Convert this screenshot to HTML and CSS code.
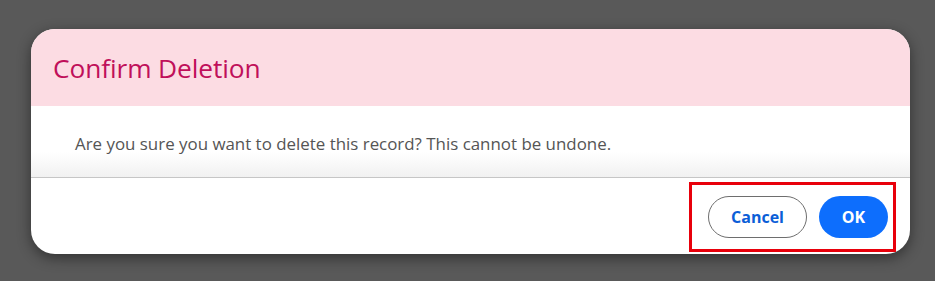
FILE: index.html
```html
<!DOCTYPE html>
<html lang="en">
<head>
<meta charset="utf-8">
<title>Confirm Deletion</title>
<link rel="stylesheet" href="styles.css">
</head>
<body>
<div class="dialog">
  <div class="dialog-header">
    <h1 class="dialog-title">Confirm Deletion</h1>
  </div>
  <div class="dialog-body">
    <p class="dialog-text">Are you sure you want to delete this record? This cannot be undone.</p>
  </div>
  <div class="dialog-footer">
    <div class="highlight">
      <button class="btn btn-cancel">Cancel</button>
      <button class="btn btn-ok">OK</button>
    </div>
  </div>
</div>
</body>
</html>
```
FILE: styles.css
```css
html, body {
  margin: 0;
  padding: 0;
}
body {
  width: 935px;
  height: 281px;
  background: #595959;
  font-family: "Open Sans", "Noto Sans", sans-serif;
  overflow: hidden;
  padding-top: 29px;
  box-sizing: border-box;
}
.dialog {
  margin-left: 31px;
  width: 879px;
  height: 225px;
  background: #fff;
  border-radius: 24px;
  overflow: hidden;
  box-shadow: 0 4px 14px rgba(0, 0, 0, 0.45);
  display: flex;
  flex-direction: column;
}
.dialog-header {
  height: 77px;
  background: #fcdce3;
  display: flex;
  align-items: center;
  padding-left: 22px;
  box-sizing: border-box;
}
.dialog-title {
  margin: 0;
  font-size: 26.3px;
  font-weight: 400;
  color: #c0105a;
  letter-spacing: -0.1px;
}
.dialog-body {
  height: 72px;
  display: flex;
  align-items: center;
  padding-left: 44px;
  padding-top: 3px;
  box-sizing: border-box;
  background: linear-gradient(to bottom, #ffffff 0%, #ffffff 65%, #f1f1f1 100%);
  border-bottom: 1px solid #c6c6c6;
}
.dialog-text {
  margin: 0;
  font-size: 16.9px;
  color: #555;
}
.dialog-footer {
  flex: 1;
  display: flex;
  justify-content: flex-end;
  align-items: center;
  padding-right: 14px;
  padding-top: 1px;
}
.highlight {
  border: 3px solid #e8000b;
  padding: 11px 5px 11px 16px;
  display: flex;
  gap: 12px;
}
.btn {
  height: 42px;
  border-radius: 21px;
  font-family: "Open Sans", "Noto Sans", sans-serif;
  font-size: 16px;
  font-weight: 700;
  cursor: pointer;
}
.btn-cancel {
  width: 99px;
  background: #fff;
  color: #0b5ed7;
  border: 1px solid #6e6e6e;
}
.btn-ok {
  width: 69px;
  background: #0d6efd;
  color: #fff;
  border: none;
}
```
